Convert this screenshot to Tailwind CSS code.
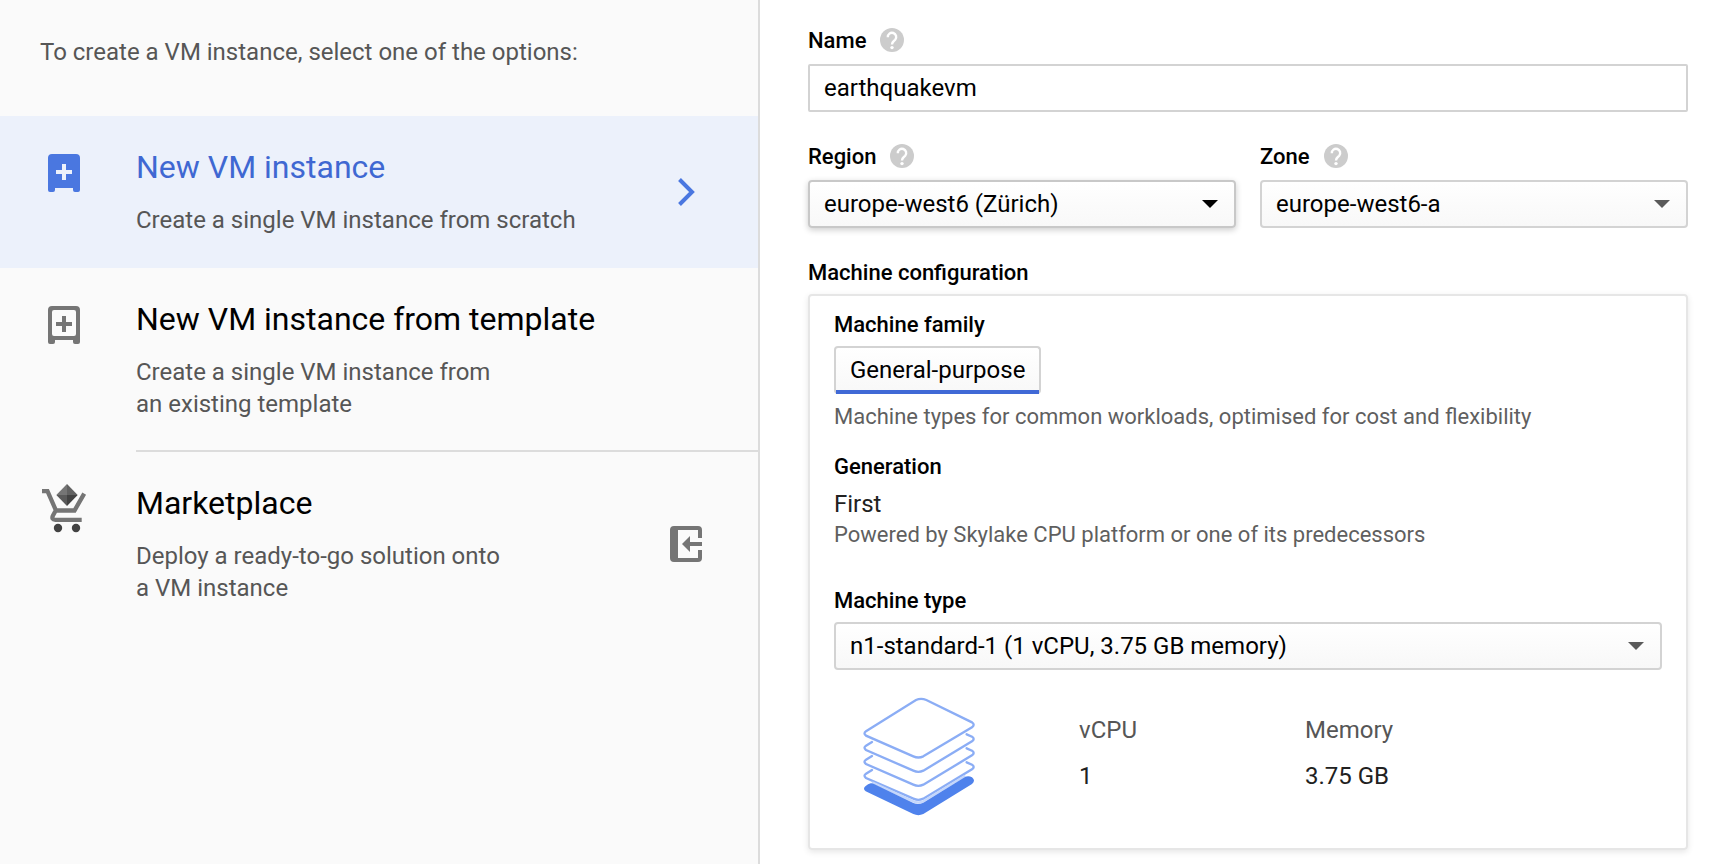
<!DOCTYPE html>
<html lang="en">
<head>
<meta charset="utf-8">
<meta name="viewport" content="width=device-width, initial-scale=1">
<title>Create an instance</title>
<script src="https://cdn.jsdelivr.net/npm/@tailwindcss/browser@4"></script>
</head>
<body class="bg-white font-[Roboto,sans-serif] text-2xl leading-8 text-black">
<div class="grid min-h-screen grid-cols-[19fr_24fr]">

  <aside class="border-r-2 border-[#dcdcdc] bg-[#fafafa] text-[#565656]">
    <p class="px-10 pt-9 pb-12">To create a VM instance, select one of the options:</p>
    <nav aria-label="Creation options">
      <button type="button" aria-current="true" class="flex w-full bg-[#ecf1fb] py-8 pr-12 pl-10 text-left">
        <svg class="mr-12 size-12 shrink-0" viewBox="0 0 48 48" aria-hidden="true">
          <path fill="#4a77e0" fill-rule="evenodd" d="M12 6h24a4 4 0 0 1 4 4v32a2 2 0 0 1-2 2h-3a2 2 0 0 1-2-2v-2H15v2a2 2 0 0 1-2 2h-3a2 2 0 0 1-2-2V10a4 4 0 0 1 4-4zm10 10v6h-6v4h6v6h4v-6h6v-4h-6v-6z"/>
        </svg>
        <span class="grow">
          <span class="mb-[18px] block text-[32px] leading-[38px] text-[#3f68d2]">New VM instance</span>
          <span class="block">Create a single VM instance from scratch</span>
        </span>
        <svg class="size-12 shrink-0 self-center" viewBox="0 0 48 48" aria-hidden="true">
          <path fill="none" stroke="#4a77e0" stroke-width="4" d="M17.500 11.500 30 24 17.500 36.500"/>
        </svg>
      </button>
      <button type="button" class="flex w-full pl-10 text-left">
        <svg class="mt-8 mr-12 size-12 shrink-0" viewBox="0 0 48 48" aria-hidden="true">
          <path fill="#757575" fill-rule="evenodd" d="M12 6h24a4 4 0 0 1 4 4v32a2 2 0 0 1-2 2h-3a2 2 0 0 1-2-2v-2H15v2a2 2 0 0 1-2 2h-3a2 2 0 0 1-2-2V10a4 4 0 0 1 4-4zm2 4a2 2 0 0 0-2 2v22a2 2 0 0 0 2 2h20a2 2 0 0 0 2-2V12a2 2 0 0 0-2-2zm8 6v6h-6v4h6v6h4v-6h6v-4h-6v-6z"/>
        </svg>
        <span class="grow border-b-2 border-[#dcdcdc] pt-8 pb-[30px]">
          <span class="mb-[18px] block text-[32px] leading-[38px] text-black">New VM instance from template</span>
          <span class="block">Create a single VM instance from<br>an existing template</span>
        </span>
      </button>
      <a href="#marketplace" class="flex w-full py-8 pr-12 pl-10">
        <svg class="mr-12 size-12 shrink-0 overflow-visible" viewBox="0 0 48 48" aria-hidden="true">
          <path fill="none" stroke="#757575" stroke-width="4.300" d="M2 7.200h5.500L16 26.500h18.500L44.200 9.700M16 26l-3 5.500q-2 4 2.500 4.300H41.700"/>
          <path fill="#757575" d="M27 0v11H16.300z"/>
          <path fill="#616161" d="M27 0l10.700 11H27z"/>
          <path fill="#5a5a5a" d="M16.300 11H27v11z"/>
          <path fill="#424242" d="M27 11h10.700L27 22z"/>
          <circle cx="18" cy="44" r="4.200" fill="#424242"/>
          <circle cx="36" cy="44" r="4.200" fill="#424242"/>
        </svg>
        <span class="grow">
          <span class="mb-[18px] block text-[32px] leading-[38px] text-black">Marketplace</span>
          <span class="block">Deploy a ready-to-go solution onto<br>a VM instance</span>
        </span>
        <svg class="size-12 shrink-0 self-center" viewBox="0 0 48 48" aria-hidden="true">
          <path fill="#757575" d="M12 6h24a4 4 0 0 1 4 4v8h-4v-8H16v28h20v-8h4v8a4 4 0 0 1-4 4H12a4 4 0 0 1-4-4V10a4 4 0 0 1 4-4z"/>
          <path fill="#757575" d="M20 24l8-8v6h12v4H28v6z"/>
        </svg>
      </a>
    </nav>
  </aside>

  <main class="pt-7 pr-8 pb-3 pl-12">
    <svg class="hidden" aria-hidden="true">
      <symbol id="help" viewBox="0 0 24 24">
        <circle cx="12" cy="12" r="12" fill="#ccc"/>
        <path fill="none" stroke="#fff" stroke-width="2.400" d="M7.800 9.200a4.200 4.200 0 1 1 7.400 2.500C13.800 13.200 12 13.600 12 16.600"/>
        <circle cx="12" cy="19.600" r="1.700" fill="#fff"/>
      </symbol>
      <symbol id="caret" viewBox="0 0 16 8"><path fill="currentColor" d="M0 0h16L8 8z"/></symbol>
    </svg>

    <form>
      <div class="mb-3 flex h-6 items-start gap-3.5">
        <label for="name" class="text-[22px] leading-[26px] font-medium">Name</label>
        <button type="button" aria-label="Help: Name"><svg class="size-6"><use href="#help"/></svg></button>
      </div>
      <input id="name" type="text" value="earthquakevm" class="block h-12 w-full rounded-xs border-2 border-[#d3d3d3] px-3.5 outline-none">

      <div class="mt-8 grid grid-cols-2 gap-6">
        <div>
          <div class="mb-3 flex h-6 items-start gap-3.5">
            <label for="region" class="text-[22px] leading-[26px] font-medium">Region</label>
            <button type="button" aria-label="Help: Region"><svg class="size-6"><use href="#help"/></svg></button>
          </div>
          <div class="grid items-center">
            <select id="region" class="col-start-1 row-start-1 h-12 w-full appearance-none rounded-sm border-2 border-[#c8c8c8] bg-linear-to-b from-white to-[#f8f8f8] px-3.5 shadow-[0_2px_6px_rgba(0,0,0,0.2)]"><option>europe-west6 (Zürich)</option></select>
            <svg class="pointer-events-none col-start-1 row-start-1 mr-[18px] h-2 w-4 justify-self-end text-black" aria-hidden="true"><use href="#caret"/></svg>
          </div>
        </div>
        <div>
          <div class="mb-3 flex h-6 items-start gap-3.5">
            <label for="zone" class="text-[22px] leading-[26px] font-medium">Zone</label>
            <button type="button" aria-label="Help: Zone"><svg class="size-6"><use href="#help"/></svg></button>
          </div>
          <div class="grid items-center">
            <select id="zone" class="col-start-1 row-start-1 h-12 w-full appearance-none rounded-sm border-2 border-[#d3d3d3] bg-linear-to-b from-white to-[#f8f8f8] px-3.5"><option>europe-west6-a</option></select>
            <svg class="pointer-events-none col-start-1 row-start-1 mr-[18px] h-2 w-4 justify-self-end text-[#5a5a5a]" aria-hidden="true"><use href="#caret"/></svg>
          </div>
        </div>
      </div>

      <h2 class="mt-8 mb-2 text-[22px] leading-[26px] font-medium">Machine configuration</h2>
      <section class="rounded-sm border-2 border-[#e6e6e6] px-6 pt-4 pb-[22px] shadow-[0_2px_6px_rgba(0,0,0,0.1)]">
        <h3 class="mb-2 text-[22px] leading-[26px] font-medium">Machine family</h3>
        <button type="button" aria-pressed="true" class="block h-12 rounded-sm border-2 border-[#d3d3d3] border-b-0 bg-linear-to-b from-white to-[#f8f8f8]"><span class="flex h-full items-center border-b-4 border-[#4069d6] px-3.5 pt-0.5">General-purpose</span></button>
        <p class="mt-2 text-[22px] leading-[30px] text-[#5f5f5f]">Machine types for common workloads, optimised for cost and flexibility</p>
        <h3 class="mt-[22px] text-[22px] leading-[26px] font-medium">Generation</h3>
        <p class="mt-2 text-[#212121]">First</p>
        <p class="text-[22px] leading-[30px] text-[#5f5f5f]">Powered by Skylake CPU platform or one of its predecessors</p>
        <label for="machine-type" class="mt-[38px] mb-2 block text-[22px] leading-[26px] font-medium">Machine type</label>
        <div class="grid items-center">
          <select id="machine-type" class="col-start-1 row-start-1 h-12 w-full appearance-none rounded-sm border-2 border-[#d3d3d3] bg-linear-to-b from-white to-[#f8f8f8] px-3.5"><option>n1-standard-1 (1 vCPU, 3.75 GB memory)</option></select>
          <svg class="pointer-events-none col-start-1 row-start-1 mr-[18px] h-2 w-4 justify-self-end text-[#5a5a5a]" aria-hidden="true"><use href="#caret"/></svg>
        </div>
        <div class="mt-4 flex pl-4">
          <svg class="mr-[89px] size-[140px] shrink-0" viewBox="0 0 420 420" aria-hidden="true">
            <g fill="none" stroke="#8badf5" stroke-width="7" stroke-linecap="round">
              <path d="M198 42Q213 35 229 42L366 109Q376 116 366 124L220 211Q205 218 190 211L48 149Q39 142 48 136Z"/>
              <path d="M66 168L48 179Q39 185 48 192L190 254Q205 261 220 254L366 166Q376 159 366 152L350 145"/>
              <path d="M66 210L48 221Q39 227 48 234L190 296Q205 303 220 296L366 208Q376 201 366 194L350 187"/>
              <path d="M66 252L48 263Q39 269 48 276L190 338Q205 345 220 338L366 250Q376 243 366 236L350 229"/>
            </g>
            <path fill="none" stroke="#c5d7fb" stroke-width="7" d="M66 289L190 346Q205 353 220 346L346 269"/>
            <path fill="#4f82ec" d="M62 292Q54 294 47 300Q37 308 47 316L190 384Q205 391 220 384L366 294Q378 284 366 274Q354 267 344 274L220 350Q205 357 190 351L72 294Q66 291 62 292Z"/>
          </svg>
          <dl class="flex gap-[170px] pt-7">
            <div class="w-14 whitespace-nowrap"><dt class="text-[#565656]">vCPU</dt><dd class="mt-3.5 text-[#212121]">1</dd></div>
            <div><dt class="text-[#565656]">Memory</dt><dd class="mt-3.5 text-[#212121]">3.75 GB</dd></div>
          </dl>
        </div>
      </section>
    </form>
  </main>
</div>
</body>
</html>
